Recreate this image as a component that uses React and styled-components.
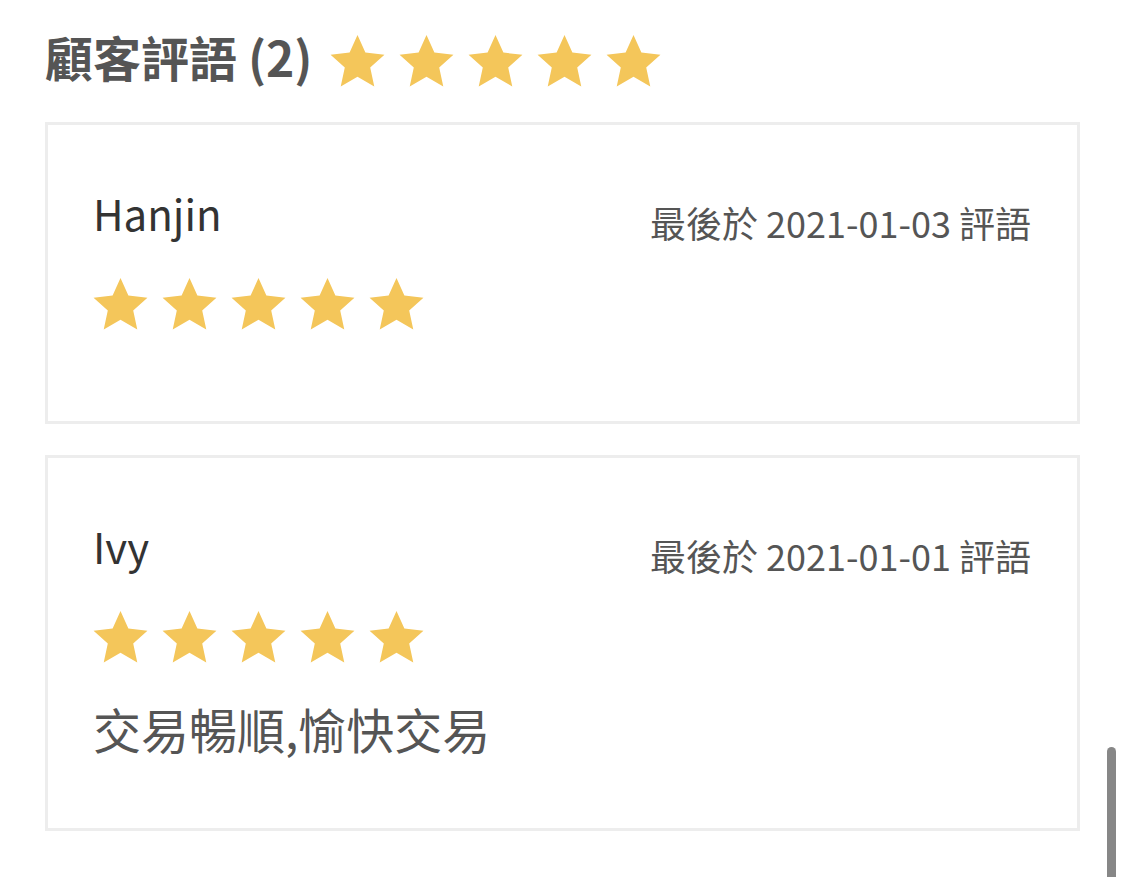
import React from "react";
import styled, { createGlobalStyle } from "styled-components";

const GlobalStyle = createGlobalStyle`
  html, body { margin: 0; padding: 0; background: #fff; }
  body {
    font-family: "Noto Sans CJK TC", "Noto Sans", sans-serif;
    -webkit-font-smoothing: antialiased;
  }
`;

const Page = styled.div`
  padding: 16px 45px 40px 45px;
  display: flex;
  flex-direction: column;
`;

const TitleRow = styled.div`
  display: flex;
  align-items: flex-start;
  gap: 14px;
  margin-bottom: 26px;
`;

const Title = styled.h2`
  margin: 0;
  font-size: 48px;
  line-height: 80px;
  font-weight: 700;
  color: #555;
`;

const TitleStars = styled.div`
  margin-top: 15px;
`;

const Stars = styled.div`
  display: flex;
  gap: ${(p) => p.$gap}px;
`;

const StarSvg = styled.svg`
  width: ${(p) => p.$size}px;
  height: ${(p) => p.$size}px;
  display: block;
  filter: blur(0.4px);
`;

const CardList = styled.div`
  display: flex;
  flex-direction: column;
  gap: 31px;
`;

const Card = styled.div`
  border: 3px solid #ededed;
  padding: 58px 46px 65px 45px;
  min-height: ${(p) => p.$minHeight || 0}px;
  box-sizing: border-box;
`;

const Header = styled.div`
  display: flex;
  justify-content: space-between;
  align-items: flex-start;
`;

const Name = styled.div`
  font-size: 42px;
  line-height: 60px;
  color: #333;
`;

const DateText = styled.div`
  margin-top: 9px;
  font-size: 36px;
  line-height: 60px;
  color: #555;
`;

const StarLine = styled.div`
  margin-top: 22px;
  margin-left: -3px;
`;

const Comment = styled.div`
  margin-top: 25px;
  font-size: 48px;
  line-height: 70px;
  color: #555;
`;

const Scrollbar = styled.div`
  position: fixed;
  right: 9px;
  top: 747px;
  width: 9px;
  height: 150px;
  border-radius: 5px;
  background: #878787;
`;

function Star({ size }) {
  return (
    <StarSvg $size={size} viewBox="0 0 24 24">
      <path
        d="M12 1.6l3.1 6.9 7.5.8-5.6 5.1 1.6 7.4L12 18l-6.6 3.8 1.6-7.4L1.4 9.3l7.5-.8z"
        fill="#F4C65A"
      />
    </StarSvg>
  );
}

function StarRow({ size = 61, gap = 8, count = 5 }) {
  return (
    <Stars $gap={gap}>
      {Array.from({ length: count }).map((_, i) => (
        <Star key={i} size={size} />
      ))}
    </Stars>
  );
}

const reviews = [
  { name: "Hanjin", date: "2021-01-03", comment: "" },
  { name: "Ivy", date: "2021-01-01", comment: "交易暢順,愉快交易" },
];

export default function App() {
  return (
    <>
      <GlobalStyle />
      <Page>
        <TitleRow>
          <Title>顧客評語 (2)</Title>
          <TitleStars>
            <StarRow />
          </TitleStars>
        </TitleRow>
        <CardList>
          {reviews.map((r) => (
            <Card key={r.name} $minHeight={r.comment ? 0 : 302}>
              <Header>
                <Name>{r.name}</Name>
                <DateText>最後於 {r.date} 評語</DateText>
              </Header>
              <StarLine>
                <StarRow />
              </StarLine>
              {r.comment && <Comment>{r.comment}</Comment>}
            </Card>
          ))}
        </CardList>
      </Page>
      <Scrollbar />
    </>
  );
}
